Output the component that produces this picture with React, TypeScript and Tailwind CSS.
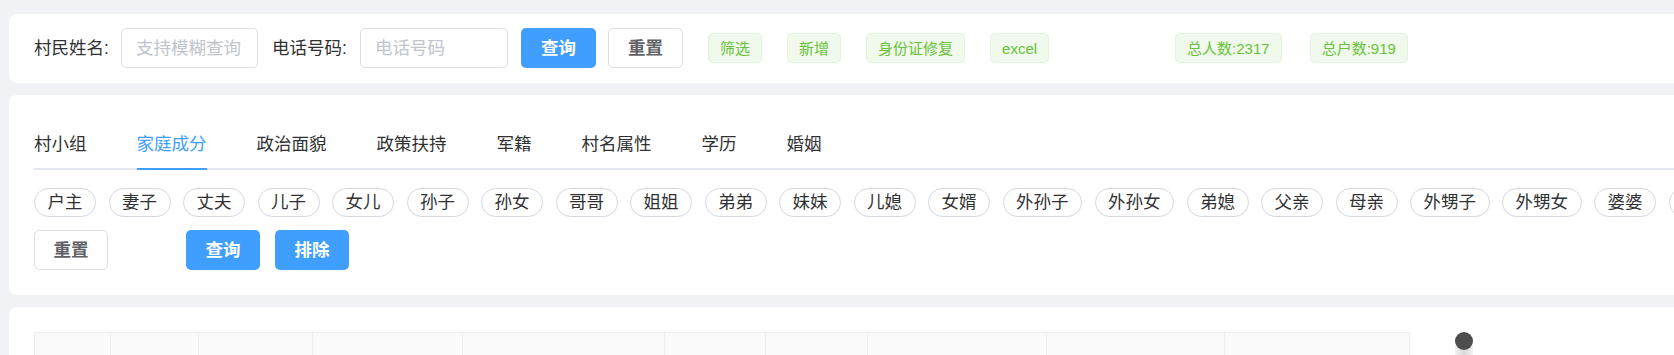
import React from 'react';

const tabs = ['村小组', '家庭成分', '政治面貌', '政策扶持', '军籍', '村名属性', '学历', '婚姻'];

const relations = [
    '户主', '妻子', '丈夫', '儿子', '女儿', '孙子', '孙女', '哥哥', '姐姐', '弟弟', '妹妹',
    '儿媳', '女婿', '外孙子', '外孙女', '弟媳', '父亲', '母亲', '外甥子', '外甥女', '婆婆', '公公', '岳父',
];

const actionTags = ['筛选', '新增', '身份证修复', 'excel'];

// widths of the header cells, left to right
const columns = [76, 88, 114, 150, 202, 101, 102, 179, 178, 185];

const GreenTag: React.FC<{ children: React.ReactNode; className?: string }> = ({ children, className = '' }) => (
    <span className={`inline-flex items-center h-[30px] px-[11px] rounded-[5px] border border-[#e1f3d8] bg-[#f0f9eb] text-[#67c23a] text-[15px] leading-none whitespace-nowrap ${className}`}>
        {children}
    </span>
);

export default function App() {
    return (
        <div
            className="w-screen h-screen overflow-hidden bg-[#f0f2f5] pt-[14px] pl-[9px]"
            style={{ fontFamily: '"Liberation Sans", "Noto Sans CJK SC", sans-serif' }}
        >
            <div className="w-[2000px] flex flex-col gap-[12px]">
                {/* search bar */}
                <div className="bg-white rounded-[8px] pt-[14px] pb-[15px] px-[25px]">
                    <div className="flex items-center h-[40px]">
                        <span className="w-[87px] text-[17.5px] text-[#303133] whitespace-nowrap">村民姓名:</span>
                        <div className="w-[137px] h-[40px] border border-[#dcdfe6] rounded-[5px] flex items-center px-[14px] text-[17.5px] text-[#c0c4cc] whitespace-nowrap">
                            支持模糊查询
                        </div>
                        <span className="ml-[14px] w-[88px] text-[17.5px] text-[#303133] whitespace-nowrap">电话号码:</span>
                        <div className="w-[148px] h-[40px] border border-[#dcdfe6] rounded-[5px] flex items-center px-[14px] text-[17.5px] text-[#c0c4cc] whitespace-nowrap">
                            电话号码
                        </div>
                        <button className="ml-[13px] w-[75px] h-[40px] rounded-[5px] bg-[#409eff] text-white text-[17.5px] font-semibold">
                            查询
                        </button>
                        <button className="ml-[12px] w-[75px] h-[40px] rounded-[5px] border border-[#dcdfe6] bg-white text-[#606266] text-[17.5px] font-semibold">
                            重置
                        </button>
                        <div className="ml-[25px] flex items-center gap-[25px]">
                            {actionTags.map(t => (
                                <GreenTag key={t}>{t}</GreenTag>
                            ))}
                        </div>
                        <GreenTag className="ml-[126px]">总人数:2317</GreenTag>
                        <GreenTag className="ml-[28px]">总户数:919</GreenTag>
                    </div>
                </div>

                {/* filter panel */}
                <div className="bg-white rounded-[8px] p-[25px]">
                    <div className="flex border-b-2 border-[#e4e7ed] h-[50px]">
                        {tabs.map((t, i) => (
                            <div
                                key={t}
                                className={`relative h-[48px] flex items-center text-[17.5px] whitespace-nowrap ${i === 0 ? 'pr-[25px]' : 'px-[25px]'} ${i === 1 ? 'text-[#409eff]' : 'text-[#303133]'}`}
                            >
                                {t}
                                {i === 1 && <div className="absolute left-[25px] right-[25px] -bottom-[2px] h-[2px] bg-[#409eff]" />}
                            </div>
                        ))}
                    </div>

                    <div className="mt-[18px] flex gap-[12.5px]">
                        {relations.map(r => (
                            <span
                                key={r}
                                className="h-[29px] px-[12.5px] rounded-full border border-[#d4d7de] text-[17.5px] text-[#303133] flex items-center whitespace-nowrap"
                            >
                                {r}
                            </span>
                        ))}
                    </div>

                    <div className="mt-[13px] flex items-center">
                        <button className="w-[74px] h-[40px] rounded-[5px] border border-[#dcdfe6] bg-white text-[#606266] text-[17.5px] font-semibold">
                            重置
                        </button>
                        <button className="ml-[78px] w-[74px] h-[40px] rounded-[5px] bg-[#409eff] text-white text-[17.5px] font-semibold">
                            查询
                        </button>
                        <button className="ml-[15px] w-[74px] h-[40px] rounded-[5px] bg-[#409eff] text-white text-[17.5px] font-semibold">
                            排除
                        </button>
                    </div>
                </div>

                {/* table */}
                <div className="bg-white rounded-[8px] pt-[25px] px-[25px] h-[200px]">
                    <div className="flex items-start">
                        <div className="flex border-t border-l border-[#ebeef5]">
                            {columns.map((w, i) => (
                                <div key={i} className="h-[50px] bg-[#fafafa] border-r border-b border-[#ebeef5]" style={{ width: w }} />
                            ))}
                        </div>
                        <div className="ml-[45px] w-[18px] flex flex-col items-center">
                            <div className="relative z-10 w-[18px] h-[18px] rounded-full bg-[#4d4d4d]" />
                            <div className="-mt-[5px] w-[18px] h-[40px] bg-gradient-to-r from-[#f2f2f2] via-[#d9d9d9] to-[#f2f2f2]" />
                        </div>
                    </div>
                </div>
            </div>
        </div>
    );
}
